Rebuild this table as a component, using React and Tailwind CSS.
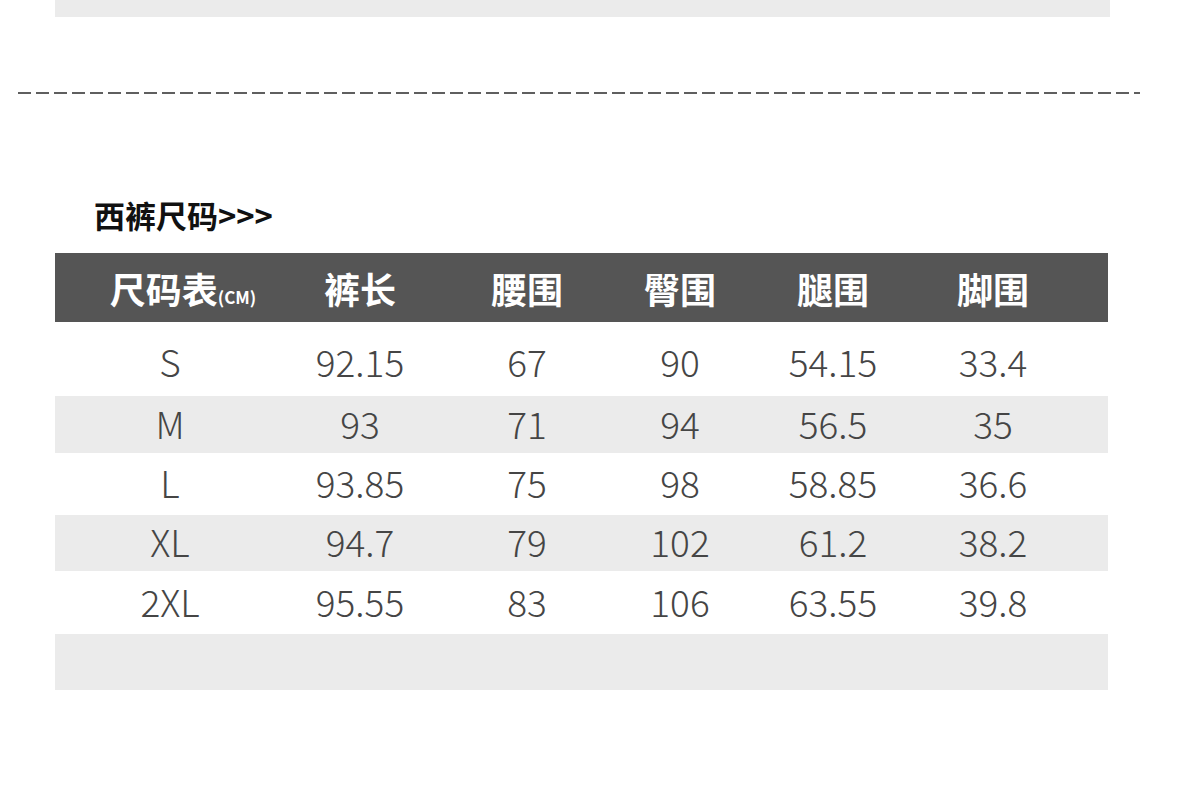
const rows = [
  { size: "S", values: ["92.15", "67", "90", "54.15", "33.4"], h: "h-[66px]", bg: "bg-white" },
  { size: "M", values: ["93", "71", "94", "56.5", "35"], h: "h-[57px]", bg: "bg-[#ebebeb]" },
  { size: "L", values: ["93.85", "75", "98", "58.85", "36.6"], h: "h-[62px]", bg: "bg-white" },
  { size: "XL", values: ["94.7", "79", "102", "61.2", "38.2"], h: "h-[56px]", bg: "bg-[#ebebeb]" },
  { size: "2XL", values: ["95.55", "83", "106", "63.55", "39.8"], h: "h-[63px]", bg: "bg-white" },
];

const headers = ["裤长", "腰围", "臀围", "腿围", "脚围"];

const cols = "grid grid-cols-[230px_150px_184px_122px_184px_136px_1fr] items-center";

const App = () => {
  return (
    <div className="w-[1200px] h-[800px] bg-white overflow-hidden font-['Noto_Sans_CJK_SC','Noto_Sans',sans-serif]">
      <div className="mx-[55px] w-[1055px] h-[17px] bg-[#ebebeb]" />

      <div className="mt-[75px] ml-[18px] w-[1122px] h-[2px] bg-[repeating-linear-gradient(to_right,#5f5f5f_0_13px,transparent_13px_18px)]" />

      <div className="mt-[99px] ml-[94px] text-[31px] leading-[44px] font-bold text-[#111]">
        西裤尺码&gt;&gt;&gt;
      </div>

      <div className="mt-[16px] mx-[55px] w-[1053px]">
        <div className={`${cols} h-[69px] bg-[#555555] text-white font-bold text-[36px]`}>
          <div className="text-center pl-[26px] whitespace-nowrap">
            尺码表<span className="text-[17px]">(CM)</span>
          </div>
          {headers.map((h) => (
            <div key={h} className="text-center">
              {h}
            </div>
          ))}
          <div />
        </div>

        <div className="h-[8px]" />

        {rows.map((r) => (
          <div
            key={r.size}
            className={`${cols} ${r.h} ${r.bg} text-[37px] leading-[44px] text-[#454545] font-light`}
          >
            <div className="text-center -mt-[4px]">{r.size}</div>
            {r.values.map((v, i) => (
              <div key={i} className="text-center -mt-[4px]">
                {v}
              </div>
            ))}
            <div />
          </div>
        ))}

        <div className="h-[56px] bg-[#ebebeb]" />
      </div>
    </div>
  );
};

export default App;
